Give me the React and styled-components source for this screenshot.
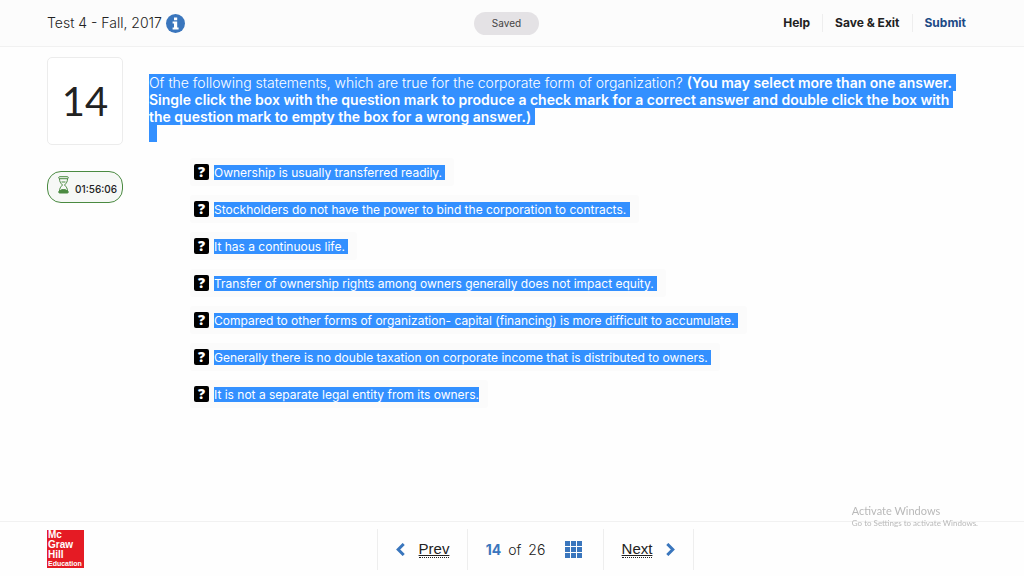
import React from "react";
import styled, { createGlobalStyle } from "styled-components";

const GlobalStyle = createGlobalStyle`
  * { box-sizing: border-box; }
  body {
    margin: 0;
    background: #fefefe;
    color: #222;
    font-family: Inter, "Liberation Sans", sans-serif;
  }
`;

const Page = styled.div`
  min-height: 100vh;
  display: flex;
  flex-direction: column;
`;

const Header = styled.header`
  display: grid;
  grid-template-columns: 1fr auto 1fr;
  align-items: center;
  height: 47px;
  padding: 0 58px 0 47px;
  background: #fcfcfc;
  border-bottom: 1px solid #f1f1f1;
`;

const TitleGroup = styled.div`
  display: flex;
  align-items: center;
  gap: 4px;
`;

const Title = styled.h1`
  margin: 0;
  font-size: 14px;
  font-weight: 300;
  line-height: 20px;
`;

const InfoButton = styled.button`
  display: flex;
  padding: 0;
  border: 0;
  background: none;
`;

const Saved = styled.span`
  padding: 0 18px;
  border-radius: 12px;
  background: #e4e2e5;
  color: #444;
  font-size: 10px;
  line-height: 23px;
`;

const Actions = styled.nav`
  display: flex;
  justify-content: flex-end;
`;

const Action = styled.a`
  padding: 0 12px;
  color: ${(p) => (p.$primary ? "#1d4a86" : "#222")};
  font-size: 12px;
  font-weight: 700;
  line-height: 18px;
  text-decoration: none;
  border-left: 1px solid #eee;

  &:first-child { border-left: 0; }
  &:last-child { padding-right: 0; }
`;

const Main = styled.main`
  flex: 1;
  display: flex;
  align-items: flex-start;
  gap: 26px;
  padding: 10px 47px;
`;

const Sidebar = styled.aside`
  flex: none;
  width: 76px;
  display: flex;
  flex-direction: column;
  gap: 26px;
`;

const NumberCard = styled.div`
  height: 88px;
  display: flex;
  align-items: center;
  justify-content: center;
  background: #fff;
  border: 1px solid #ececec;
  border-radius: 5px;
  font-family: Lato, sans-serif;
  font-size: 40px;
`;

const Timer = styled.div`
  height: 32px;
  display: flex;
  align-items: center;
  justify-content: flex-end;
  gap: 6px;
  padding: 0 5px;
  background: #f6f8f6;
  border: 1px solid #4a8a41;
  border-radius: 14px;
  font-size: 10px;
  font-weight: 500;
  line-height: 16px;
`;

const TimerIcon = styled.svg`
  margin-bottom: 4px;
`;

const TimeText = styled.span`
  padding-top: 3px;
`;

const Content = styled.section`
  flex: 1;
  padding-top: 17px;
`;

const Question = styled.p`
  margin: 0;
  font-size: 14px;
  font-weight: 300;
  line-height: 17px;

  b { font-weight: 600; }
`;

const Selected = styled.span`
  padding: ${(p) => (p.$question ? "0 4px 0 0" : "0")};
  background: #3390ff;
  color: #fff;
  white-space: pre-wrap;
`;

const Caret = styled.span`
  display: block;
  width: 8px;
  height: 17px;
  background: #3390ff;
`;

const Options = styled.form`
  display: flex;
  flex-direction: column;
  align-items: flex-start;
  gap: 9px;
  padding: 16px 0 0 41px;
`;

const Option = styled.label`
  display: flex;
  align-items: center;
  gap: 5px;
  min-height: 28px;
  padding: 0 9px 0 4px;
  background: #fbfbfb;
  border-radius: 3px;
  font-size: 12px;
  line-height: 15px;
`;

const Box = styled.input`
  appearance: none;
  flex: none;
  display: grid;
  place-items: center;
  width: 15px;
  height: 16px;
  margin: 0;
  background: #000;
  border-radius: 2px;
  color: #fff;

  &::before {
    content: "?";
    font: 800 14px/16px "Open Sans", sans-serif;
  }
`;

const Footer = styled.footer`
  display: grid;
  grid-template-columns: 1fr auto 1fr;
  align-items: center;
  height: 55px;
  padding-left: 47px;
  border-top: 1px solid #f1f1f1;
`;

const Logo = styled.div`
  width: 37px;
  height: 38px;
  padding: 0 1px;
  background: #e51b24;
  color: #fff;
  font-family: "Liberation Sans", sans-serif;
  font-size: 10px;
  font-weight: 700;
  line-height: 10px;
`;

const LogoSmall = styled.span`
  display: block;
  font-size: 7px;
  line-height: 7px;
`;

const Pager = styled.nav`
  display: flex;
  border-right: 1px solid #eee;
`;

const PagerCell = styled.div`
  width: ${(p) => (p.$wide ? 136 : 90)}px;
  height: 41px;
  display: flex;
  align-items: center;
  justify-content: center;
  gap: 20px;
  border-left: 1px solid #eee;
  ${(p) => p.$wide && "padding-right: 3px;"}
`;

const PageLink = styled.a`
  display: flex;
  align-items: center;
  gap: 14px;
  color: #222;
  font-family: "Liberation Sans", sans-serif;
  font-size: 15px;
  line-height: 16px;
  text-decoration: none;
`;

const LinkText = styled.span`
  text-decoration: underline;
  border-bottom: 1px dotted #222;
`;

const Count = styled.span`
  display: flex;
  gap: 7px;
  font-size: 14px;
  font-weight: 300;
`;

const Current = styled.strong`
  color: #3a76bd;
  font-weight: 700;
`;

const GridButton = styled.button`
  display: grid;
  padding: 0;
  border: 0;
  background: none;
`;

const Watermark = styled.div`
  position: fixed;
  right: 46px;
  bottom: 47px;
  color: #b9b9b9;
  font-family: Lato, sans-serif;
  font-size: 8px;
  line-height: 11px;
`;

const WatermarkTitle = styled.div`
  font-size: 11px;
  line-height: 14px;
`;

const options = [
  "Ownership is usually transferred readily. ",
  "Stockholders do not have the power to bind the corporation to contracts. ",
  "It has a continuous life. ",
  "Transfer of ownership rights among owners generally does not impact equity. ",
  "Compared to other forms of organization- capital (financing) is more difficult to accumulate. ",
  "Generally there is no double taxation on corporate income that is distributed to owners. ",
  "It is not a separate legal entity from its owners.",
];

const InfoIcon = () => (
  <svg width="19" height="19" viewBox="0 0 19 19" aria-hidden="true">
    <circle cx="9.500" cy="9.500" r="9.500" fill="#3a76bd" />
    <path d="M8 3.500h3.200v2.700H8zM6.600 7.500h4.600v5.900h1.400v2H6.600v-2H8V9.500H6.600z" fill="#fff" />
  </svg>
);

const Hourglass = () => (
  <TimerIcon width="11" height="18" viewBox="0 0 11 18" fill="none" stroke="#4a8a41" aria-hidden="true">
    <rect x="0.700" y="0.700" width="9.600" height="2" rx="1" />
    <path d="M1.500 2.700c0 3 1 4.300 3 6.300-2 2-3 3.500-3 6M9.500 2.700c0 3-1 4.300-3 6.300 2 2 3 3.500 3 6M3.500 6h4" />
    <path d="M2 15c.5-1 1.500-1.500 3.500-1.500s3 .5 3.500 1.500z" fill="#4a8a41" />
    <rect x="0.700" y="15" width="9.600" height="2" rx="1" fill="#4a8a41" />
  </TimerIcon>
);

const Chevron = ({ right }) => (
  <svg width="9" height="13" viewBox="0 0 9 13" fill="none" stroke="#3a76bd" strokeWidth="3" aria-hidden="true">
    <path d={right ? "M1.300 1l5.500 5.500L1.300 12" : "M7.700 1L2.200 6.500 7.700 12"} />
  </svg>
);

const GridIcon = () => (
  <svg width="17" height="17" viewBox="0 0 17 17" fill="#3a76bd" aria-hidden="true">
    {[0, 6, 12].map((y) => [0, 6, 12].map((x) => <rect key={`${x}-${y}`} x={x} y={y} width="5" height="5" />))}
  </svg>
);

export default function App() {
  return (
    <Page>
      <GlobalStyle />
      <Header>
        <TitleGroup>
          <Title>Test 4 - Fall, 2017</Title>
          <InfoButton aria-label="Test information"><InfoIcon /></InfoButton>
        </TitleGroup>
        <Saved>Saved</Saved>
        <Actions>
          <Action href="#help">Help</Action>
          <Action href="#exit">Save &amp; Exit</Action>
          <Action href="#submit" $primary>Submit</Action>
        </Actions>
      </Header>
      <Main>
        <Sidebar>
          <NumberCard>14</NumberCard>
          <Timer><Hourglass /><TimeText>01:56:06</TimeText></Timer>
        </Sidebar>
        <Content>
          <Question>
            <Selected $question>
              Of the following statements, which are true for the corporate form of organization?{" "}
              <b>(You may select more than one answer.</b>
            </Selected>
            <br />
            <Selected $question>
              <b>Single click the box with the question mark to produce a check mark for a correct answer and double click the box with</b>
            </Selected>
            <br />
            <Selected $question>
              <b>the question mark to empty the box for a wrong answer.)</b>
            </Selected>
            <Caret />
          </Question>
          <Options>
            {options.map((text) => (
              <Option key={text}>
                <Box type="checkbox" />
                <Selected>{text}</Selected>
              </Option>
            ))}
          </Options>
        </Content>
      </Main>
      <Footer>
        <Logo>Mc<br />Graw<br />Hill<LogoSmall>Education</LogoSmall></Logo>
        <Pager>
          <PagerCell>
            <PageLink href="#prev"><Chevron /><LinkText>Prev</LinkText></PageLink>
          </PagerCell>
          <PagerCell $wide>
            <Count><Current>14</Current><span>of</span><span>26</span></Count>
            <GridButton aria-label="All questions"><GridIcon /></GridButton>
          </PagerCell>
          <PagerCell>
            <PageLink href="#next"><LinkText>Next</LinkText><Chevron right /></PageLink>
          </PagerCell>
        </Pager>
      </Footer>
      <Watermark>
        <WatermarkTitle>Activate Windows</WatermarkTitle>
        Go to Settings to activate Windows.
      </Watermark>
    </Page>
  );
}
